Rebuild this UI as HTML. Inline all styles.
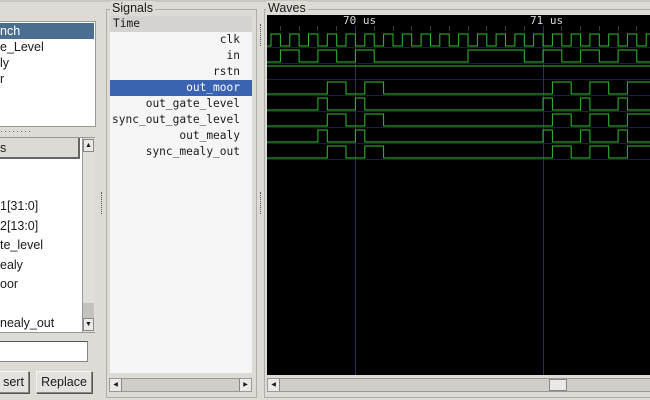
<!DOCTYPE html>
<html><head><meta charset="utf-8"><style>
*{margin:0;padding:0;box-sizing:border-box}
body{width:650px;height:400px;overflow:hidden;background:#dddbd6;position:relative;font-family:"Liberation Sans",sans-serif;font-size:12.5px;color:#1a1a1a}
.a{position:absolute}
.mono{font-family:"DejaVu Sans Mono","Liberation Mono",monospace;font-size:11.2px}
.lt{position:absolute;left:0;white-space:nowrap}
.btn{position:absolute;background:#e4e2de;border:1px solid #8a8882;border-top-color:#f4f4f2;border-left-color:#f4f4f2;box-shadow:1px 1px 0 #555;text-align:center;line-height:20px;font-size:12.5px}
.sr{position:absolute;right:12px;white-space:nowrap}
</style></head><body>
<div class="a" style="left:0;top:0;width:650px;height:2px;background:#c8c6c1"></div>
<div class="a" style="left:0;top:21px;width:96px;height:106px;background:#fff;border:1px solid #9a9892;border-left:none"></div>
<div class="a" style="left:0;top:23px;width:94px;height:16px;background:#4b6e90"></div>
<div class="lt" style="top:24px;color:#fff;left:0">nch</div>
<div class="lt" style="top:40px">e_Level</div>
<div class="lt" style="top:56px">ly</div>
<div class="lt" style="top:72px">r</div>
<div class="a" style="left:0;top:126px;font-size:9px;letter-spacing:1px;color:#555">········</div>
<div class="a" style="left:0;top:137px;width:95px;height:196px;background:#fff;border:1px solid #9a9892;border-left:none"></div>
<div class="a" style="left:0;top:138px;width:80px;height:21px;background:#dcdad5;border-right:2px solid #666;border-bottom:2px solid #666"></div>
<div class="lt" style="top:141px">s</div>
<div class="a" style="left:82px;top:138px;width:13px;height:194px;background:#e0ded9;border-left:1px solid #999"></div>
<div class="a" style="left:83px;top:139px;width:11px;height:13px;background:#ebe9e5;border:1px solid #888;font-size:7px;text-align:center;line-height:11px">▲</div>
<div class="a" style="left:83px;top:303px;width:11px;height:15px;background:#c4c2bd"></div>
<div class="a" style="left:83px;top:318px;width:11px;height:13px;background:#ebe9e5;border:1px solid #888;font-size:7px;text-align:center;line-height:11px">▼</div>
<div class="lt" style="top:199px">1[31:0]</div>
<div class="lt" style="top:219px">2[13:0]</div>
<div class="lt" style="top:238px">te_level</div>
<div class="lt" style="top:258px">ealy</div>
<div class="lt" style="top:277px">oor</div>
<div class="lt" style="top:316px">nealy_out</div>
<div class="a" style="left:0;top:341px;width:88px;height:21px;background:#fff;border:1px solid #888;border-left:none;border-top-color:#555"></div>
<div class="btn" style="left:-2px;top:371px;width:31px;height:22px">sert</div>
<div class="btn" style="left:36px;top:371px;width:56px;height:22px">Replace</div>
<div class="a" style="left:101px;top:192px;width:2px;height:22px;border-left:1px dotted #555"></div>
<div class="a" style="left:106px;top:9px;width:151px;height:389px;border:1px solid #b0aea8"></div>
<div class="a" style="left:110px;top:1px;background:#dddbd6;padding:0 2px">Signals</div>
<div class="a" style="left:110px;top:16px;width:142px;height:357px;background:#f5f5f5"></div>
<div class="a mono" style="left:110px;top:16px;width:142px;height:16px;background:#d4d3d0;padding-left:3px;line-height:16px">Time</div>
<div class="a" style="left:110px;top:80px;width:142px;height:16px;background:#3a63b2"></div>
<div class="a mono" style="left:110px;top:32px;width:142px;height:160px;line-height:16px">
<div class="sr" style="top:0">clk</div>
<div class="sr" style="top:16px">in</div>
<div class="sr" style="top:32px">rstn</div>
<div class="sr" style="top:48px;color:#fff">out_moor</div>
<div class="sr" style="top:64px">out_gate_level</div>
<div class="sr" style="top:80px">sync_out_gate_level</div>
<div class="sr" style="top:96px">out_mealy</div>
<div class="sr" style="top:112px">sync_mealy_out</div>
</div>
<div class="a" style="left:109px;top:378px;width:143px;height:14px;background:#d0cec9;border:1px solid #999"></div>
<div class="a" style="left:110px;top:379px;width:12px;height:12px;background:#ebe9e5;border-right:1px solid #888;font-size:6px;text-align:center;line-height:12px">◀</div>
<div class="a" style="left:239px;top:379px;width:12px;height:12px;background:#ebe9e5;border-left:1px solid #888;font-size:6px;text-align:center;line-height:12px">▶</div>
<div class="a" style="left:260px;top:24px;width:2px;height:22px;border-left:1px dotted #555"></div>
<div class="a" style="left:260px;top:192px;width:2px;height:22px;border-left:1px dotted #555"></div>
<div class="a" style="left:264px;top:9px;width:400px;height:389px;border:1px solid #b0aea8"></div>
<div class="a" style="left:266px;top:1px;background:#dddbd6;padding:0 2px">Waves</div>
<svg class="a" style="left:0;top:0" width="650" height="400">
<rect x="267" y="15" width="383" height="360" fill="#000"/>
<g stroke="#1c1c4a" stroke-width="1">
<line x1="267" y1="47.5" x2="650" y2="47.5"/><line x1="267" y1="63.5" x2="650" y2="63.5"/><line x1="267" y1="79.5" x2="650" y2="79.5"/><line x1="267" y1="95.5" x2="650" y2="95.5"/><line x1="267" y1="111.5" x2="650" y2="111.5"/><line x1="267" y1="127.5" x2="650" y2="127.5"/><line x1="267" y1="143.5" x2="650" y2="143.5"/><line x1="267" y1="159.5" x2="650" y2="159.5"/>
</g>
<g stroke="#2a2a80" stroke-width="1"><line x1="355.5" y1="26" x2="355.5" y2="375"/><line x1="543.5" y1="26" x2="543.5" y2="375"/></g>
<g stroke="#3a3a3a" stroke-width="1">
<path d="M280.5 26V31M299.5 26V31M317.5 26V31M336.5 26V31M374.5 26V31M393.5 26V31M411.5 26V31M430.5 26V31M449.5 26V31M468.5 26V31M486.5 26V31M505.5 26V31M524.5 26V31M561.5 26V31M580.5 26V31M599.5 26V31M618.5 26V31M636.5 26V31"/>
</g>
<text x="343" y="24" fill="#d8d8d8" font-family="DejaVu Sans Mono,Liberation Mono,monospace" font-size="11">70 us</text>
<text x="530" y="24" fill="#d8d8d8" font-family="DejaVu Sans Mono,Liberation Mono,monospace" font-size="11">71 us</text>
<g fill="none" stroke="#2fc02f" stroke-width="1">
<path d="M267 46H271V34H280.4V46H289.8V34H299.1V46H308.5V34H317.9V46H327.3V34H336.7V46H346V34H355.4V46H364.8V34H374.2V46H383.6V34H393V46H402.3V34H411.7V46H421.1V34H430.5V46H439.8V34H449.2V46H458.6V34H468V46H477.4V34H486.8V46H496.1V34H505.5V46H514.9V34H524.3V46H533.6V34H543V46H552.4V34H561.8V46H571.2V34H580.6V46H589.9V34H599.3V46H608.7V34H618.1V46H627.4V34H636.8V46H646.2V34H655.6"/>
<path d="M267 62H280.4V50H299.1V62H317.9V50H336.7V62H355.4V50H374.2V62H468V50H524.3V62H543V50H561.8V62H580.6V50H599.3V62H618.1V50H636.8V62H655"/>
<path d="M267 66H655"/>
<path d="M267 94H327.3V82H346V94H364.8V82H383.6V94H552.4V82H571.2V94H589.9V82H608.7V94H627.4V82H655"/>
<path d="M267 110H317.9V98H327.3V110H355.4V98H364.8V110H543V98H552.4V110H580.6V98H589.9V110H618.1V98H627.4V110H655"/>
<path d="M267 126H327.3V114H346V126H364.8V114H383.6V126H552.4V114H571.2V126H589.9V114H608.7V126H627.4V114H655"/>
<path d="M267 142H317.9V130H327.3V142H355.4V130H364.8V142H543V130H552.4V142H580.6V130H589.9V142H618.1V130H627.4V142H655"/>
<path d="M267 158H327.3V146H346V158H364.8V146H383.6V158H552.4V146H571.2V158H589.9V146H608.7V158H627.4V146H655"/>
</g>
</svg>
<div class="a" style="left:267px;top:378px;width:383px;height:14px;background:#d0cec9;border:1px solid #999;border-right:none"></div>
<div class="a" style="left:268px;top:379px;width:12px;height:12px;background:#ebe9e5;border-right:1px solid #888;font-size:6px;text-align:center;line-height:12px">◀</div>
<div class="a" style="left:549px;top:379px;width:18px;height:12px;background:#ebe9e5;border:1px solid #888"></div>
</body></html>
